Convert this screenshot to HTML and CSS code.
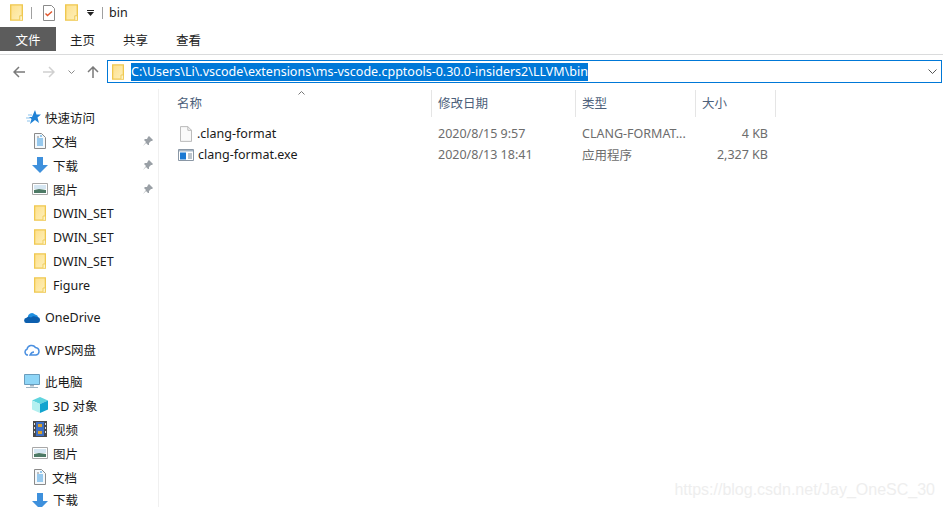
FILE: index.html
```html
<!DOCTYPE html>
<html lang="zh-CN">
<head>
    <meta charset="UTF-8">
    <title>bin</title>
    <link rel="stylesheet" href="styles.css">
</head>
<body>
    <svg class="sprites" width="0" height="0">
        <defs>
            <linearGradient id="folder-fill" x1="0" y1="0" x2="1" y2="1">
                <stop offset="0" stop-color="#fee08a"/>
                <stop offset="1" stop-color="#fdf0bd"/>
            </linearGradient>
        </defs>
        <symbol id="folder" viewBox="0 0 14 18">
            <path d="M.75.75h12.500v16.500H.75z" fill="url(#folder-fill)" stroke="#efc84f" stroke-width="1.500"/>
            <path d="M10.500 17v-4.500h3V17" fill="#fdf3c8" stroke="#efc84f"/>
        </symbol>
        <symbol id="doc" viewBox="0 0 12 16">
            <path d="M.5.5h7l4 4v11H.5z" fill="#f4f8fb" stroke="#8a8a8a"/>
            <path d="M6 3h2M3 6h6M3 8h6M3 10h6M3 12h6" stroke="#3a9ae0"/>
            <path d="M3 4h2" stroke="#888"/>
        </symbol>
        <symbol id="down" viewBox="0 0 16 16">
            <path d="M5 0h6v8h5l-8 8-8-8h5z" fill="#3e90dc"/>
        </symbol>
        <symbol id="pic" viewBox="0 0 16 12">
            <path d="M.5.5h15v11H.5z" fill="#fff" stroke="#a8a8a8"/>
            <path d="M2 2h12v4H2z" fill="#d5e6f2"/>
            <path d="M2 7l5-1 7 1v3H2z" fill="#4d7a66"/>
        </symbol>
        <symbol id="pin" viewBox="0 0 10 10">
            <path d="M6 0l4 4-1 1H8L6 7v2H5L3 7 0 10l3-4-2-2 1-1h2l1-2z" fill="#9aa0a6"/>
        </symbol>
        <symbol id="star" viewBox="0 0 15 14">
            <path d="M0 8h4M1 11h3M2 5h4" stroke="#8cc4ee" stroke-width="1.200"/>
            <path d="M9 0l1.500 4.500H15l-3.500 3L13 13 9 10 4 14l1.500-5L3 7h3z" fill="#1f82d6"/>
        </symbol>
    </svg>

    <header class="title-bar">
        <svg class="title-folder"><use href="#folder"/></svg>
        <span class="title-sep"></span>
        <svg class="title-check" viewBox="0 0 12 16">
            <path d="M.5.5h8l3 3v12H.5z" fill="#fff" stroke="#8a8a8a"/>
            <path d="M2.500 8.500l2 2 4.500-4" fill="none" stroke="#e0552b" stroke-width="1.400"/>
        </svg>
        <svg class="title-folder title-folder-2"><use href="#folder"/></svg>
        <svg class="title-drop" viewBox="0 0 7 6">
            <path d="M0 0h7v1H0zM0 2h7L3.500 6z" fill="#222"/>
        </svg>
        <span class="title-sep title-sep-2"></span>
        <span class="title-text">bin</span>
    </header>

    <nav class="ribbon">
        <a class="tab tab-file">文件</a>
        <a class="tab">主页</a>
        <a class="tab">共享</a>
        <a class="tab">查看</a>
    </nav>

    <div class="address-row">
        <div class="nav-buttons">
            <svg class="nav-arrow" viewBox="0 0 12 12"><path d="M6 1L1 6l5 5M1 6h11" fill="none" stroke="#7a7a7a" stroke-width="1.500"/></svg>
            <svg class="nav-arrow nav-forward" viewBox="0 0 12 12"><path d="M6 1l5 5-5 5M11 6H0" fill="none" stroke="#d0d0d0" stroke-width="1.500"/></svg>
            <svg class="nav-chevron" viewBox="0 0 7 4"><path d="M.5.500l3 3 3-3" fill="none" stroke="#8a8a8a"/></svg>
            <svg class="nav-arrow nav-up" viewBox="0 0 12 12"><path d="M1 6l5-5 5 5M6 1v11" fill="none" stroke="#7a7a7a" stroke-width="1.500"/></svg>
        </div>
        <div class="address-box">
            <svg class="address-folder"><use href="#folder"/></svg>
            <span class="address-path">C:\Users\Li\.vscode\extensions\ms-vscode.cpptools-0.30.0-insiders2\LLVM\bin</span>
            <svg class="address-chevron" viewBox="0 0 9 5"><path d="M.5.500l4 4 4-4" fill="none" stroke="#555"/></svg>
        </div>
    </div>

    <main class="body-row">
        <aside class="sidebar">
            <div class="nav-item nav-root"><svg class="ico-star"><use href="#star"/></svg>快速访问</div>
            <div class="nav-item nav-child"><svg class="ico-doc"><use href="#doc"/></svg>文档<svg class="ico-pin"><use href="#pin"/></svg></div>
            <div class="nav-item nav-child"><svg class="ico-down"><use href="#down"/></svg>下载<svg class="ico-pin"><use href="#pin"/></svg></div>
            <div class="nav-item nav-child"><svg class="ico-pic"><use href="#pic"/></svg>图片<svg class="ico-pin"><use href="#pin"/></svg></div>
            <div class="nav-item nav-child"><svg class="ico-folder"><use href="#folder"/></svg>DWIN_SET</div>
            <div class="nav-item nav-child"><svg class="ico-folder"><use href="#folder"/></svg>DWIN_SET</div>
            <div class="nav-item nav-child"><svg class="ico-folder"><use href="#folder"/></svg>DWIN_SET</div>
            <div class="nav-item nav-child"><svg class="ico-folder"><use href="#folder"/></svg>Figure</div>

            <div class="nav-item nav-root nav-group">
                <svg class="ico-cloud" viewBox="0 0 16 11"><path d="M4 6a4 4 0 0 1 7-3.500A3.500 3.500 0 0 1 14 6z" fill="#1f8fe0"/><path d="M3 11a2.600 2.600 0 0 1-.5-5.200C4 4.500 5 4.500 7 5.500c2-1.500 3-1.500 6-.5a3 3 0 0 1 0 6z" fill="#0d5fae"/></svg>OneDrive
            </div>
            <div class="nav-item nav-root nav-group">
                <svg class="ico-cloud ico-wps" viewBox="0 0 16 13"><path d="M4 12a3 3 0 0 1-1-5.800A4.700 4.700 0 0 1 11.500 4.500 3.800 3.800 0 0 1 12 12H6c1-2 2-3 4-3" fill="none" stroke="#4a8fe0" stroke-width="1.500"/></svg>WPS网盘
            </div>
            <div class="nav-item nav-root nav-group">
                <svg class="ico-pc" viewBox="0 0 16 14"><path d="M.5.500h15v10H.500z" fill="#8fd6f7" stroke="#6a9dbd"/><path d="M6 11h4v1.500H6zM2 13h12v1H2z" fill="#9fb4c2"/></svg>此电脑
            </div>
            <div class="nav-item nav-child"><svg class="ico-cube" viewBox="0 0 16 16"><path d="M8 0l8 3.500-8 3.500-8-3.500z" fill="#5fd4de"/><path d="M0 3.500l8 3.500v9l-8-3.500z" fill="#b4f0f0"/><path d="M16 3.500L8 7v9l8-3.500z" fill="#12a4cf"/></svg>3D 对象</div>
            <div class="nav-item nav-child"><svg class="ico-film" viewBox="0 0 14 16"><path d="M0 0h14v16H0z" fill="#4a4a4a"/><path d="M3 1h8v14H3z" fill="#3d6fc4"/><path d="M5 3h4v3H5zM5 10h4v3H5z" fill="#d9a02e"/><path d="M1 2h1v2H1zM1 6h1v2H1zM1 10h1v2H1zM12 2h1v2h-1zM12 6h1v2h-1zM12 10h1v2h-1z" fill="#e4e4e4"/></svg>视频</div>
            <div class="nav-item nav-child"><svg class="ico-pic"><use href="#pic"/></svg>图片</div>
            <div class="nav-item nav-child"><svg class="ico-doc"><use href="#doc"/></svg>文档</div>
            <div class="nav-item nav-child nav-last"><svg class="ico-down"><use href="#down"/></svg>下载</div>
        </aside>

        <section class="files">
            <svg class="sort-arrow" viewBox="0 0 7 4"><path d="M.5 3.500l3-3 3 3" fill="none" stroke="#777"/></svg>
            <div class="file-head">
                <div class="col col-name">名称</div>
                <div class="col col-date">修改日期</div>
                <div class="col col-type">类型</div>
                <div class="col col-size">大小</div>
            </div>
            <div class="file-row">
                <div class="cell cell-name">
                    <svg class="ico-file" viewBox="0 0 13 17"><path d="M.5.500h8l4 4v12H.5z" fill="#fafafa" stroke="#b4b4b4"/><path d="M8.500.5v4h4" fill="none" stroke="#b4b4b4"/></svg>
                    .clang-format
                </div>
                <div class="cell cell-date">2020/8/15 9:57</div>
                <div class="cell cell-type">CLANG-FORMAT...</div>
                <div class="cell cell-size">4 KB</div>
            </div>
            <div class="file-row">
                <div class="cell cell-name">
                    <svg class="ico-exe" viewBox="0 0 16 12"><path d="M.5.500h15v11H.5z" fill="#fff" stroke="#8a97a5"/><path d="M1 1h14v1.500H1z" fill="#a4b4c4"/><path d="M2 3.500h6v7H2z" fill="#1a78d2"/><path d="M10 5h4M10 7h4M10 9h4" stroke="#7a8a9a"/></svg>
                    clang-format.exe
                </div>
                <div class="cell cell-date">2020/8/13 18:41</div>
                <div class="cell cell-type">应用程序</div>
                <div class="cell cell-size">2,327 KB</div>
            </div>
        </section>
    </main>

    <div class="watermark">https://blog.csdn.net/Jay_OneSC_30</div>
</body>
</html>
```

FILE: styles.css
```css
html, body {
    height: 100%;
}

body {
    margin: 0;
    background-color: #ffffff;
    color: #1a1a1a;
    font-family: "Noto Sans", "Noto Sans CJK SC", sans-serif;
    font-size: 12.5px;
    overflow: hidden;
}

svg {
    display: block;
    flex: none;
}

.sprites {
    position: absolute;
}

.title-bar {
    display: flex;
    align-items: center;
    height: 25px;
    padding-left: 10px;
    padding-bottom: 2px;
}

.title-folder {
    width: 13px;
    height: 17px;
}

.title-sep {
    width: 1px;
    height: 12px;
    margin-left: 8px;
    background-color: #a0a0a0;
}

.title-check {
    width: 12px;
    height: 16px;
    margin-left: 11px;
}

.title-folder-2 {
    margin-left: 10px;
}

.title-drop {
    width: 7px;
    height: 6px;
    margin-left: 9px;
}

.title-sep-2 {
    margin-left: 8px;
}

.title-text {
    margin-left: 6px;
}

.ribbon {
    display: flex;
    height: 24px;
    padding-bottom: 3px;
    border-bottom: 1px solid #dadbdc;
}

.tab {
    display: flex;
    align-items: center;
    justify-content: center;
    width: 53px;
    color: #222;
}

.tab-file {
    width: 56px;
    background-color: #5c5c5c;
    color: #ffffff;
}

.address-row {
    display: flex;
    align-items: center;
    height: 23px;
    margin-top: 5px;
    padding-right: 1px;
}

.nav-buttons {
    display: flex;
    align-items: center;
    width: 107px;
    padding-left: 13px;
    box-sizing: border-box;
}

.nav-arrow {
    width: 12px;
    height: 12px;
}

.nav-forward {
    margin-left: 18px;
}

.nav-chevron {
    width: 7px;
    height: 4px;
    margin-left: 13px;
}

.nav-up {
    margin-left: 12px;
}

.address-box {
    flex: 1;
    display: flex;
    align-items: center;
    height: 23px;
    padding-left: 4px;
    border: 1px solid #0078d7;
    box-sizing: border-box;
}

.address-folder {
    width: 12px;
    height: 16px;
}

.address-path {
    margin-left: 7px;
    padding-bottom: 1px;
    background-color: #0078d7;
    color: #ffffff;
    line-height: 17px;
    white-space: nowrap;
}

.address-chevron {
    width: 9px;
    height: 5px;
    margin-left: auto;
    margin-right: 4px;
}

.body-row {
    display: flex;
    margin-top: 6px;
}

.sidebar {
    width: 159px;
    height: 418px;
    padding-top: 16px;
    box-sizing: border-box;
    border-right: 1px solid #f0f0f0;
    flex: none;
    overflow: hidden;
}

.nav-item {
    display: flex;
    align-items: center;
    height: 24px;
    white-space: nowrap;
}

.nav-root {
    padding-left: 24px;
}

.nav-root svg {
    margin-right: 5px;
}

.nav-child {
    padding-left: 32px;
}

.nav-child svg {
    margin-right: 6px;
}

.nav-group {
    margin-top: 8px;
}

/* the window cuts this row off, keep its text inside the frame */
.nav-last {
    align-items: flex-end;
    height: 18px;
    line-height: 12px;
}

.nav-last svg {
    margin-bottom: -2px;
}

.nav-root .ico-star {
    width: 15px;
    height: 14px;
    margin-left: 2px;
    margin-right: 4px;
}

.ico-doc {
    width: 12px;
    height: 16px;
    margin-left: 2px;
}

.nav-child .ico-down,
.nav-child .ico-pic,
.nav-child .ico-cube {
    width: 16px;
    margin-right: 5px;
}

.ico-down,
.ico-cube {
    height: 16px;
}

.ico-pic {
    height: 12px;
}

.nav-child .ico-folder {
    width: 12px;
    height: 16px;
    margin-left: 2px;
    margin-right: 7px;
}

.nav-child .ico-pin {
    width: 10px;
    height: 10px;
    margin-left: auto;
    margin-right: 5px;
}

.ico-cloud {
    width: 16px;
    height: 11px;
}

.ico-wps {
    height: 13px;
}

.ico-pc {
    width: 16px;
    height: 14px;
}

.ico-film {
    width: 14px;
    height: 16px;
    margin-left: 1px;
}

.files {
    position: relative;
    flex: 1;
    padding-top: 1px;
}

.sort-arrow {
    position: absolute;
    top: 2px;
    left: 139px;
    width: 7px;
    height: 4px;
}

.file-head {
    display: flex;
    height: 27px;
    color: #4c607a;
}

.col {
    display: flex;
    align-items: center;
    box-sizing: border-box;
    padding-left: 6px;
    padding-bottom: 2px;
    border-right: 1px solid #e5e5e5;
}

.col-name {
    width: 273px;
    padding-left: 18px;
}

.col-date {
    width: 144px;
}

.col-type {
    width: 120px;
}

.col-size {
    width: 80px;
}

.file-row {
    display: flex;
    align-items: center;
    height: 21px;
}

.file-head + .file-row {
    margin-top: 6px;
}

.cell {
    box-sizing: border-box;
    color: #6d6d6d;
    white-space: nowrap;
}

.cell-name {
    display: flex;
    align-items: center;
    gap: 5px;
    width: 273px;
    padding-left: 21px;
    color: #1a1a1a;
}

.cell-date {
    width: 144px;
    padding-left: 6px;
}

.cell-type {
    width: 120px;
    padding-left: 6px;
}

.cell-size {
    width: 72px;
    text-align: right;
}

.ico-file {
    width: 12px;
    height: 16px;
}

.ico-exe {
    width: 16px;
    height: 12px;
    margin-left: -2px;
    margin-right: -1px;
}

.watermark {
    position: absolute;
    right: 8px;
    bottom: 8px;
    color: #eeeeee;
    font-family: "Liberation Sans", sans-serif;
    font-size: 16px;
    white-space: nowrap;
}
```
